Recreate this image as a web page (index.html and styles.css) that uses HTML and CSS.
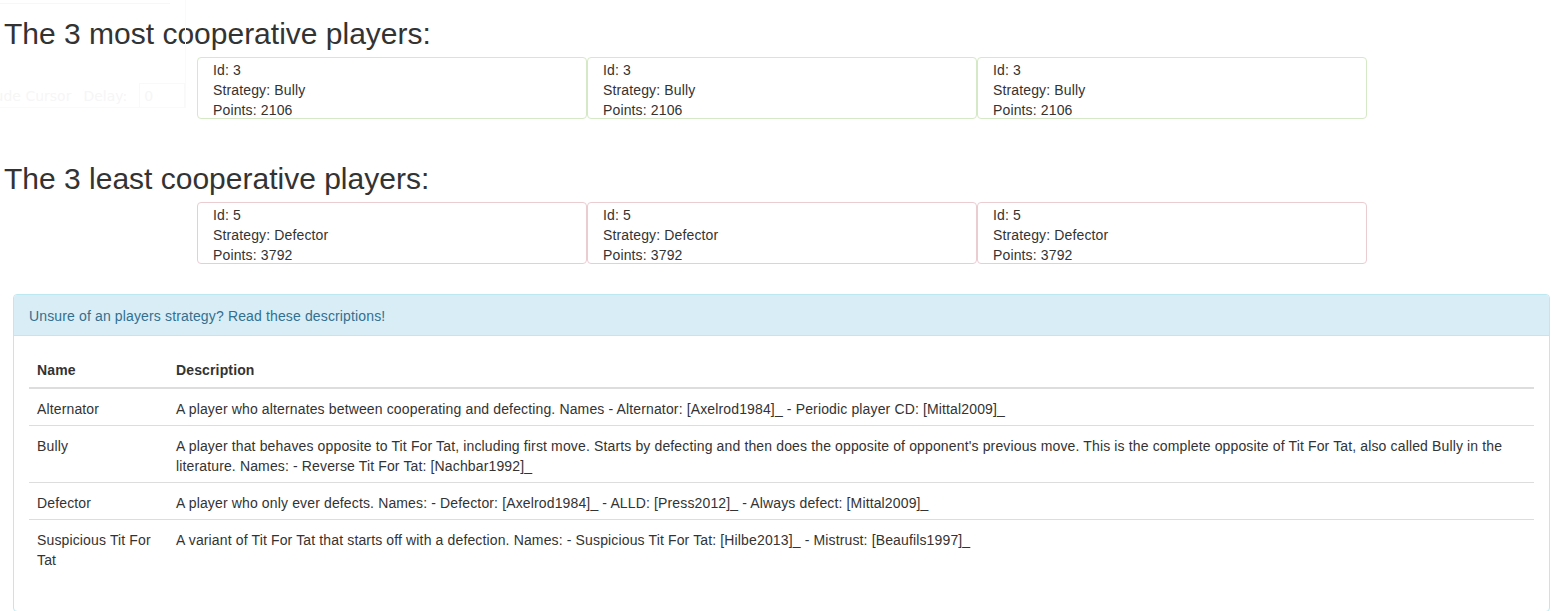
FILE: index.html
```html
<!DOCTYPE html>
<html lang="en">
<head>
<meta charset="utf-8">
<title>Players</title>
<link rel="stylesheet" href="styles.css">
</head>
<body>
<div class="ghost-widget">
  <div class="ghost-bar"></div>
  <div class="ghost-row"><span class="ghost-label">Include Cursor</span><span class="ghost-label">Delay:</span><span class="ghost-input">0</span></div>
</div>
<div class="page">
  <h2 class="section-title">The 3 most cooperative players:</h2>
  <div class="player-row">
    <div class="player-card good"><div>Id: 3</div><div>Strategy: Bully</div><div>Points: 2106</div></div>
    <div class="player-card good"><div>Id: 3</div><div>Strategy: Bully</div><div>Points: 2106</div></div>
    <div class="player-card good"><div>Id: 3</div><div>Strategy: Bully</div><div>Points: 2106</div></div>
  </div>
  <h2 class="section-title">The 3 least cooperative players:</h2>
  <div class="player-row last">
    <div class="player-card bad"><div>Id: 5</div><div>Strategy: Defector</div><div>Points: 3792</div></div>
    <div class="player-card bad"><div>Id: 5</div><div>Strategy: Defector</div><div>Points: 3792</div></div>
    <div class="player-card bad"><div>Id: 5</div><div>Strategy: Defector</div><div>Points: 3792</div></div>
  </div>
  <div class="info-panel">
    <div class="info-heading">Unsure of an players strategy? Read these descriptions!</div>
    <div class="info-body">
      <table class="strategy-table">
        <thead>
          <tr><th class="col-name">Name</th><th>Description</th></tr>
        </thead>
        <tbody>
          <tr><td>Alternator</td><td>A player who alternates between cooperating and defecting. Names - Alternator: [Axelrod1984]_ - Periodic player CD: [Mittal2009]_</td></tr>
          <tr><td>Bully</td><td>A player that behaves opposite to Tit For Tat, including first move. Starts by defecting and then does the opposite of opponent's previous move. This is the complete opposite of Tit For Tat, also called Bully in the literature. Names: - Reverse Tit For Tat: [Nachbar1992]_</td></tr>
          <tr><td>Defector</td><td>A player who only ever defects. Names: - Defector: [Axelrod1984]_ - ALLD: [Press2012]_ - Always defect: [Mittal2009]_</td></tr>
          <tr><td>Suspicious Tit For Tat</td><td>A variant of Tit For Tat that starts off with a defection. Names: - Suspicious Tit For Tat: [Hilbe2013]_ - Mistrust: [Beaufils1997]_</td></tr>
        </tbody>
      </table>
    </div>
  </div>
</div>
</body>
</html>
```

FILE: styles.css
```css
html, body {
  margin: 0;
  padding: 0;
  background: #fff;
}

body {
  font-family: "Liberation Sans", Arial, sans-serif;
  font-size: 14px;
  line-height: 20px;
  color: #333;
}

.page {
  display: flex;
  flex-direction: column;
  align-items: flex-start;
  letter-spacing: 0.14px;
}

.section-title {
  font-size: 30px;
  line-height: 33px;
  font-weight: normal;
  letter-spacing: 0;
  margin: 17px 0 7px 4px;
}

.player-row {
  display: flex;
  width: 1170px;
  margin-left: 197px;
  margin-bottom: 26px;
}

.player-row.last {
  margin-bottom: 30px;
}

.player-card {
  flex: 0 0 390px;
  box-sizing: border-box;
  height: 62px;
  padding: 2px 15px 0;
  border: 1px solid #d6e9c6;
  border-radius: 4px;
  line-height: 20px;
}

.player-card.bad {
  border-color: #ebccd1;
}

.info-panel {
  box-sizing: border-box;
  width: 1537px;
  margin-left: 13px;
  border: 1px solid #bce8f1;
  border-radius: 4px;
}

.info-heading {
  padding: 11px 15px 9px;
  background: #d9edf7;
  color: #31708f;
  border-bottom: 1px solid #bce8f1;
  border-radius: 3px 3px 0 0;
}

.info-body {
  padding: 15px;
}

.strategy-table {
  width: 100%;
  border-collapse: collapse;
  border-spacing: 0;
  margin-bottom: 20px;
}

.strategy-table th {
  text-align: left;
  font-weight: bold;
  padding: 9px 8px 7px;
  line-height: 20px;
  vertical-align: bottom;
  border-bottom: 2px solid #ddd;
}

.strategy-table td {
  padding: 10px 8px 6px;
  line-height: 20px;
  vertical-align: top;
  border-top: 1px solid #ddd;
}

.strategy-table .col-name {
  width: 123px;
}

/* faint ghost of a screen-recorder widget over the top-left corner */
.ghost-widget {
  position: absolute;
  left: 0;
  top: 0;
  width: 185px;
  height: 107px;
  overflow: hidden;
  border-right: 1px solid #fafafa;
  border-bottom: 1px solid #fafafa;
  pointer-events: none;
}

.ghost-bar {
  height: 1px;
  width: 170px;
  margin-top: 3px;
  background: #f7f7f7;
}

.ghost-row {
  display: flex;
  align-items: center;
  gap: 12px;
  margin-top: 79px;
  margin-left: -30px;
  font-family: "DejaVu Sans", sans-serif;
  font-size: 14px;
  color: #f6f6f6;
  white-space: nowrap;
}

.ghost-input {
  display: inline-block;
  width: 48px;
  height: 24px;
  line-height: 24px;
  padding-left: 4px;
  border: 1px solid #f9f9f9;
}
```
